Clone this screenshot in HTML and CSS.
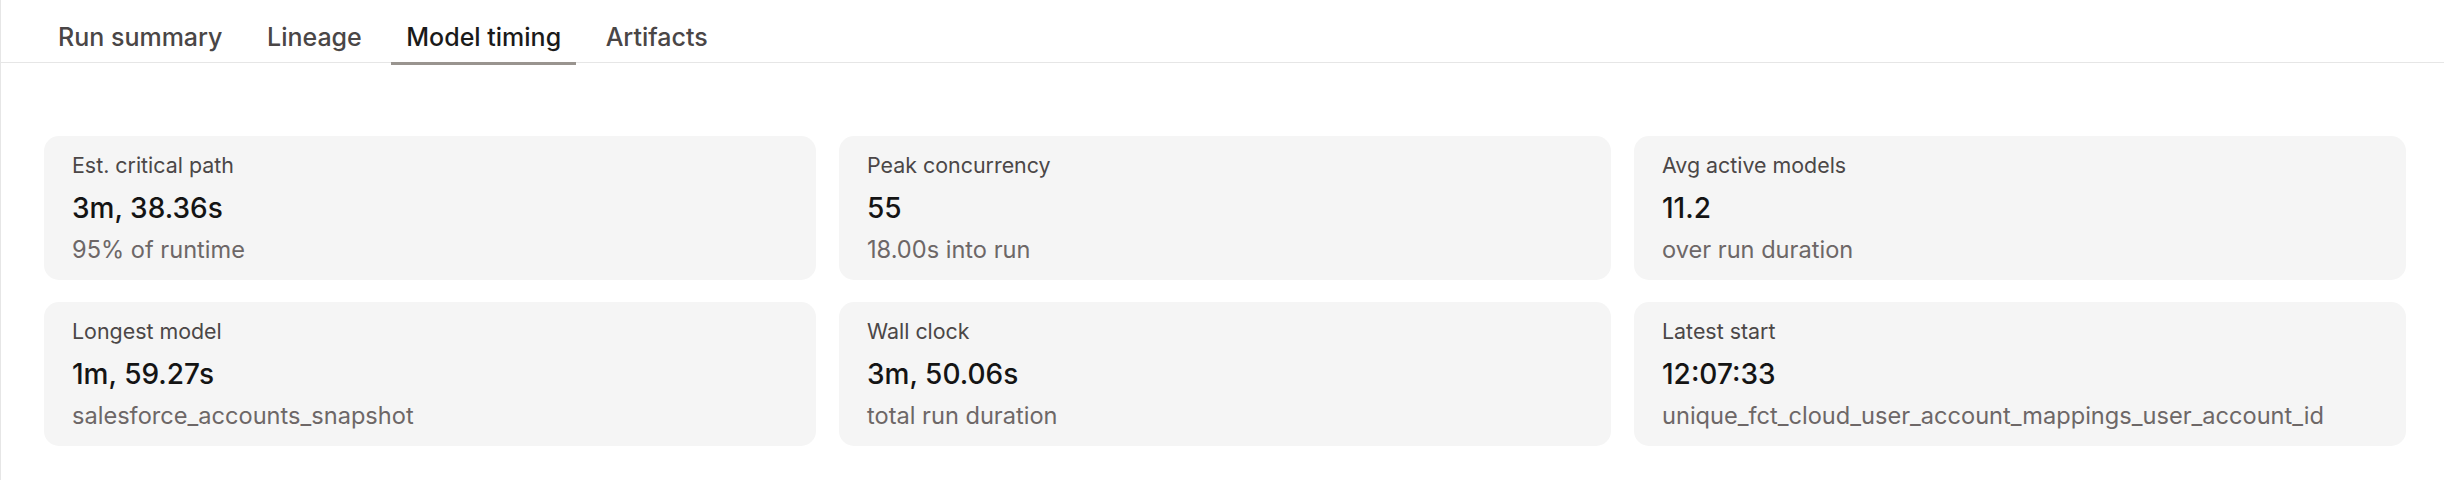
FILE: index.html
```html
<!DOCTYPE html>
<html lang="en">
<head>
<meta charset="utf-8">
<title>Model timing</title>
<link rel="stylesheet" href="styles.css">
</head>
<body>
<main class="page">
  <nav class="tabs">
    <a class="tab">Run summary</a>
    <a class="tab">Lineage</a>
    <a class="tab tab-active">Model timing</a>
    <a class="tab">Artifacts</a>
  </nav>
  <section class="stats">
    <div class="card">
      <div class="label">Est. critical path</div>
      <div class="value">3m, 38.36s</div>
      <div class="sub">95% of runtime</div>
    </div>
    <div class="card">
      <div class="label">Peak concurrency</div>
      <div class="value">55</div>
      <div class="sub">18.00s into run</div>
    </div>
    <div class="card">
      <div class="label">Avg active models</div>
      <div class="value">11.2</div>
      <div class="sub">over run duration</div>
    </div>
    <div class="card">
      <div class="label">Longest model</div>
      <div class="value">1m, 59.27s</div>
      <div class="sub">salesforce_accounts_snapshot</div>
    </div>
    <div class="card">
      <div class="label">Wall clock</div>
      <div class="value">3m, 50.06s</div>
      <div class="sub">total run duration</div>
    </div>
    <div class="card">
      <div class="label">Latest start</div>
      <div class="value">12:07:33</div>
      <div class="sub">unique_fct_cloud_user_account_mappings_user_account_id</div>
    </div>
  </section>
</main>
</body>
</html>
```
FILE: styles.css
```css
html, body {
  margin: 0;
  padding: 0;
  background: #ffffff;
}
body {
  font-family: Inter, "Noto Sans", "Liberation Sans", sans-serif;
  color: #1a1a1a;
}
.page {
  border-left: 1px solid #e6e6e6;
  min-height: 480px;
  box-sizing: border-box;
}
.tabs {
  display: flex;
  gap: 14.5px;
  padding-left: 42px;
  border-bottom: 1px solid #e6e6e6;
}
.tab {
  display: block;
  height: 65px;
  box-sizing: border-box;
  margin-bottom: -3px;
  padding: 19px 15px 0;
  font-size: 25px;
  line-height: 36px;
  font-weight: 500;
  color: #4a4646;
  border-bottom: 3px solid transparent;
  white-space: nowrap;
}
.tab-active {
  color: #1a1a1a;
  border-bottom-color: #99948f;
}
.stats {
  display: grid;
  grid-template-columns: repeat(3, 1fr);
  column-gap: 23px;
  row-gap: 22px;
  padding: 73px 38px 0 43px;
}
.card {
  background: #f5f5f5;
  border-radius: 15px;
  padding: 15px 28px;
  height: 144px;
  box-sizing: border-box;
  display: flex;
  flex-direction: column;
}
.label {
  font-size: 21.4px;
  line-height: 28px;
  color: #4b4747;
}
.value {
  margin-top: 11px;
  font-size: 28px;
  line-height: 36px;
  font-weight: 500;
  color: #141414;
}
.sub {
  margin-top: 9px;
  font-size: 23.6px;
  line-height: 30px;
  color: #6d6767;
  white-space: nowrap;
}
```
